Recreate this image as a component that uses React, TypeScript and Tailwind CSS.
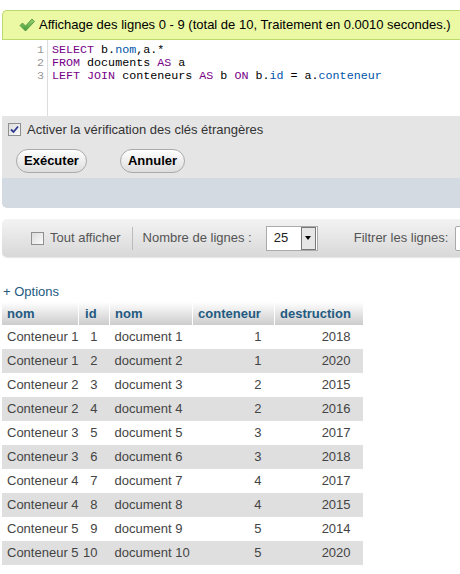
const rows = [
  ['Conteneur 1', '1', 'document 1', '1', '2018'],
  ['Conteneur 1', '2', 'document 2', '1', '2020'],
  ['Conteneur 2', '3', 'document 3', '2', '2015'],
  ['Conteneur 2', '4', 'document 4', '2', '2016'],
  ['Conteneur 3', '5', 'document 5', '3', '2017'],
  ['Conteneur 3', '6', 'document 6', '3', '2018'],
  ['Conteneur 4', '7', 'document 7', '4', '2017'],
  ['Conteneur 4', '8', 'document 8', '4', '2015'],
  ['Conteneur 5', '9', 'document 9', '5', '2014'],
  ['Conteneur 5', '10', 'document 10', '5', '2020'],
];

const kw = 'text-[#770088]';
const vr = 'text-[#0055aa]';

function CheckIcon() {
  return (
    <svg width="16" height="14" viewBox="0 0 16 14" className="shrink-0">
      <defs>
        <linearGradient id="ck" x1="0" y1="0" x2="0" y2="1">
          <stop offset="0" stopColor="#9bd36b" />
          <stop offset="1" stopColor="#3f9b3a" />
        </linearGradient>
      </defs>
      <path
        d="M1 7.5 L3.5 5 L6.5 8 L13 1 L15.5 3.5 L6.5 13 Z"
        fill="url(#ck)"
        stroke="#4b8f3c"
        strokeWidth="0.8"
        strokeLinejoin="round"
      />
    </svg>
  );
}

function Box({ checked }: { checked?: boolean }) {
  return (
    <span className="flex h-[13px] w-[13px] shrink-0 items-center justify-center border border-[#8e8f8f] bg-gradient-to-br from-[#dcdcdc] to-[#fbfbfb]">
      {checked && (
        <svg width="9" height="9" viewBox="0 0 9 9">
          <path d="M1 4.5 L3.5 7 L8 1.5" fill="none" stroke="#2b3a8c" strokeWidth="1.8" />
        </svg>
      )}
    </span>
  );
}

const btn =
  'h-[24px] rounded-full border border-[#aaaaaa] bg-gradient-to-b from-white to-[#dddddd] px-[7px] font-bold text-black';

export default function App() {
  return (
    <div className="h-[574px] w-[460px] overflow-hidden bg-white font-['Liberation_Sans',Arial,sans-serif] text-[13px]">
      <div className="w-[600px] pl-[2px] pt-[10px]">
        <div className="flex h-[30px] items-center gap-[4px] rounded-tl-[5px] border border-r-0 border-[#bcd96c] bg-[#ebf8a4] pl-[16px] text-black">
          <CheckIcon />
          <span>Affichage des lignes 0 - 9 (total de 10, Traitement en 0.0010 secondes.)</span>
        </div>

        <div className="flex h-[76px] bg-white font-['Liberation_Mono','Courier_New',monospace] text-[11.7px] leading-[13px]">
          <div className="w-[46px] border-r border-[#dddddd] pr-[3px] pt-[4px] text-right text-[#999999]">
            <div>1</div>
            <div>2</div>
            <div>3</div>
          </div>
          <div className="whitespace-pre pl-[4px] pt-[4px] text-black">
            <div>
              <span className={kw}>SELECT</span> b.<span className={vr}>nom</span>,a.*
            </div>
            <div>
              <span className={kw}>FROM</span> documents <span className={kw}>AS</span> a
            </div>
            <div>
              <span className={kw}>LEFT</span> <span className={kw}>JOIN</span> conteneurs{' '}
              <span className={kw}>AS</span> b <span className={kw}>ON</span> b.<span className={vr}>id</span> = a.
              <span className={vr}>conteneur</span>
            </div>
          </div>
        </div>

        <div className="h-[62px] bg-[#e5e5e5] pl-[6px] pt-[4px] text-[#333333]">
          <div className="flex items-center gap-[6px]">
            <Box checked />
            <span>Activer la vérification des clés étrangères</span>
          </div>
          <div className="mt-[9px] flex gap-[33px] pl-[8px]">
            <button className={btn}>Exécuter</button>
            <button className={btn}>Annuler</button>
          </div>
        </div>
        <div className="h-[30px] rounded-bl-[5px] bg-[#d3dae1]" />

        <div className="mt-[11px] flex h-[38px] items-center rounded-l-[5px] bg-gradient-to-b from-[#f3f3f3] to-[#d8d8d8] pl-[29px] text-[#555555] shadow-[0_1px_1px_rgba(0,0,0,0.1)]">
          <Box />
          <span className="ml-[6px]">Tout afficher</span>
          <span className="ml-[11px] h-[23px] w-px bg-[#bbbbbb]" />
          <span className="ml-[10px]">Nombre de lignes :</span>
          <div className="ml-[14px] flex h-[25px] w-[52px] items-center border border-[#aaaaaa] bg-white">
            <span className="flex-1 pl-[7px] text-[#222222]">25</span>
            <span className="mr-px flex h-[23px] w-[15px] items-center justify-center border border-[#777777] bg-[#e6e6e6]">
              <span className="h-0 w-0 border-x-[3.5px] border-t-[4px] border-x-transparent border-t-black" />
            </span>
          </div>
          <span className="ml-[36px]">Filtrer les lignes:</span>
          <span className="ml-[7px] h-[25px] w-[100px] rounded-[2px] border border-[#aaaaaa] bg-white" />
        </div>

        <div className="mt-[27px] pl-[1px] leading-[15px] text-[#235a81]">+ Options</div>

        <table className="mt-[3px] border-collapse text-[#444444]">
          <thead>
            <tr className="h-[23px] bg-gradient-to-b from-white to-[#cccccc] text-left font-bold text-[#235a81]">
              <th className="w-[76px] border-r border-white pl-[5px]">nom</th>
              <th className="w-[31px] border-r border-white pl-[6px]">id</th>
              <th className="w-[83px] border-r border-white pl-[5px]">nom</th>
              <th className="w-[82px] border-r border-white pl-[5px]">conteneur</th>
              <th className="w-[88px] pl-[5px]">destruction</th>
            </tr>
          </thead>
          <tbody>
            {rows.map((r, i) => (
              <tr key={i} className={`h-[24px] ${i % 2 === 1 ? 'bg-[#dfdfdf]' : 'bg-white'}`}>
                <td className="whitespace-nowrap pl-[5px]">{r[0]}</td>
                <td className="pr-[12px] text-right">{r[1]}</td>
                <td className="whitespace-nowrap pl-[5px]">{r[2]}</td>
                <td className="pr-[13px] text-right">{r[3]}</td>
                <td className="pr-[12px] text-right">{r[4]}</td>
              </tr>
            ))}
          </tbody>
        </table>
      </div>
    </div>
  );
}
